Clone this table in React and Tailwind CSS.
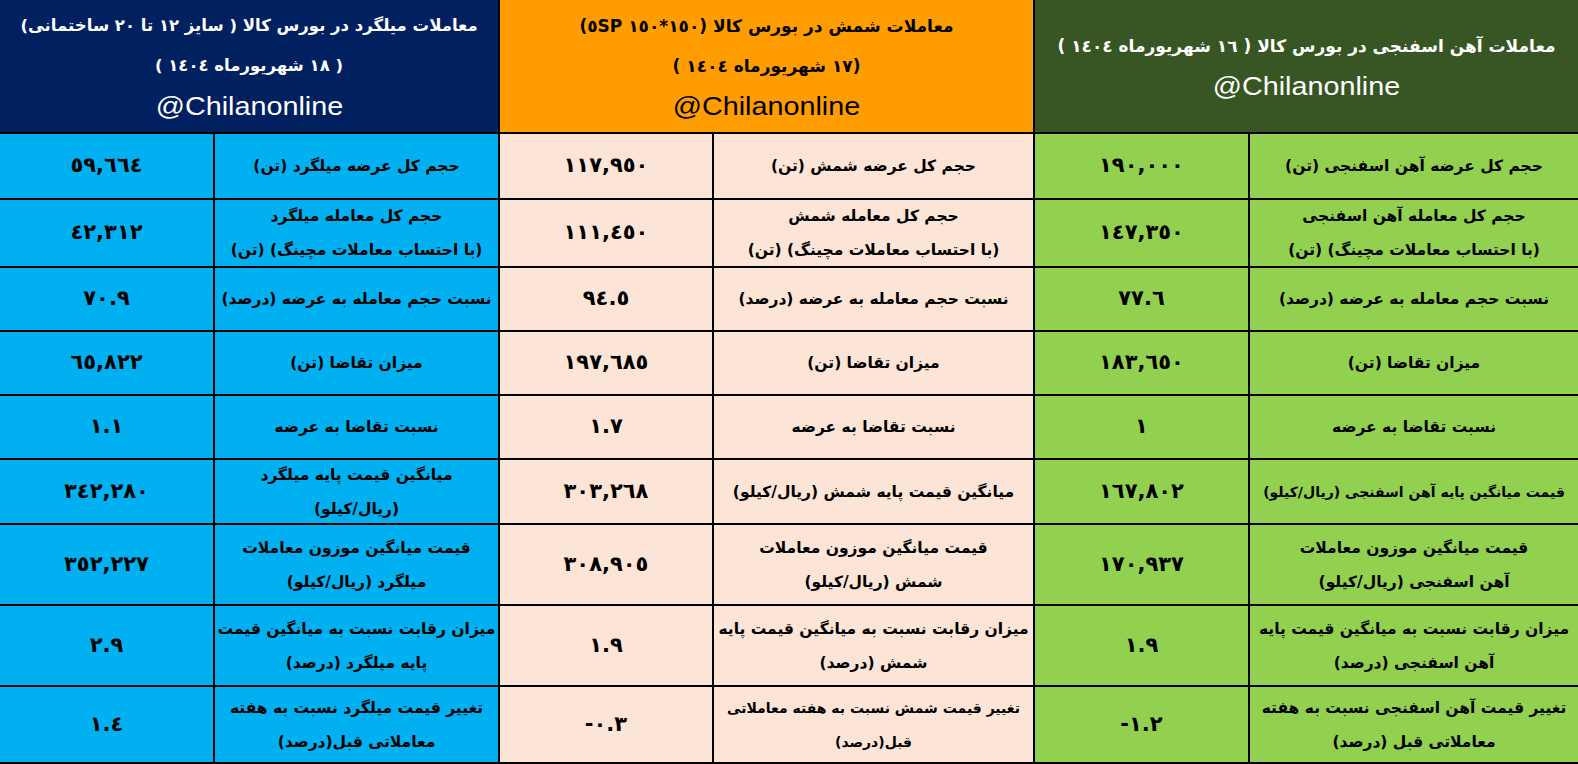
import React from "react";

const rowHeights = [
  "h-[64px]",
  "h-[66px]",
  "h-[62px]",
  "h-[62px]",
  "h-[62px]",
  "h-[63px]",
  "h-[79px]",
  "h-[79px]",
  "h-[75px]",
];

const panels = [
  {
    width: "w-[498px]",
    valueWidth: "w-[213px]",
    header: "bg-[#002060] text-white",
    titleSize: "text-[16.5px]",
    cell: "bg-[#00b0f0]",
    title: [
      "معاملات میلگرد در بورس کالا ( سایز ١٢ تا ٢٠ ساختمانی)",
      "( ١٨ شهریورماه  ١٤٠٤ )",
    ],
    rows: [
      ["٥٩,٦٦٤", ["حجم کل عرضه میلگرد (تن)"]],
      ["٤٢,٣١٢", ["حجم کل معامله میلگرد", "(با احتساب معاملات مچینگ) (تن)"]],
      ["٧٠.٩", ["نسبت حجم معامله به عرضه (درصد)"]],
      ["٦٥,٨٢٢", ["میزان تقاضا (تن)"]],
      ["١.١", ["نسبت تقاضا به عرضه"]],
      ["٣٤٢,٢٨٠", ["میانگین قیمت پایه میلگرد", "(ریال/کیلو)"]],
      ["٣٥٢,٢٢٧", ["قیمت میانگین موزون معاملات", "میلگرد (ریال/کیلو)"]],
      ["٢.٩", ["میزان رقابت نسبت به میانگین قیمت", "پایه میلگرد (درصد)"]],
      ["١.٤", ["تغییر قیمت میلگرد نسبت به هفته", "معاملاتی قبل(درصد)"]],
    ],
  },
  {
    width: "w-[533px]",
    valueWidth: "w-[212px]",
    header: "bg-[#ff9c00] text-black",
    titleSize: "text-[17px]",
    cell: "bg-[#fce4d6]",
    title: ["معاملات شمش در بورس کالا (١٥٠*١٥٠ ٥SP)", "(١٧ شهریورماه  ١٤٠٤ )"],
    rows: [
      ["١١٧,٩٥٠", ["حجم کل عرضه شمش (تن)"]],
      ["١١١,٤٥٠", ["حجم کل معامله شمش", "(با احتساب معاملات مچینگ) (تن)"]],
      ["٩٤.٥", ["نسبت حجم معامله به عرضه (درصد)"]],
      ["١٩٧,٦٨٥", ["میزان تقاضا (تن)"]],
      ["١.٧", ["نسبت تقاضا به عرضه"]],
      ["٣٠٣,٢٦٨", ["میانگین قیمت پایه شمش (ریال/کیلو)"]],
      ["٣٠٨,٩٠٥", ["قیمت میانگین موزون معاملات", "شمش (ریال/کیلو)"]],
      ["١.٩", ["میزان رقابت نسبت به میانگین قیمت پایه", "شمش (درصد)"]],
      ["-٠.٣", ["تغییر قیمت شمش نسبت به هفته معاملاتی", "قبل(درصد)"], true],
    ],
  },
  {
    width: "w-[543px]",
    valueWidth: "w-[213px]",
    header: "bg-[#375623] text-white",
    titleSize: "text-[17px]",
    cell: "bg-[#92d050]",
    title: ["معاملات آهن اسفنجی در بورس کالا ( ١٦ شهریورماه ١٤٠٤ )"],
    rows: [
      ["١٩٠,٠٠٠", ["حجم کل عرضه آهن اسفنجی (تن)"]],
      ["١٤٧,٣٥٠", ["حجم کل معامله آهن اسفنجی", "(با احتساب معاملات مچینگ) (تن)"]],
      ["٧٧.٦", ["نسبت حجم معامله به عرضه (درصد)"]],
      ["١٨٣,٦٥٠", ["میزان تقاضا (تن)"]],
      ["١", ["نسبت تقاضا به عرضه"]],
      ["١٦٧,٨٠٢", ["قیمت میانگین پایه آهن اسفنجی (ریال/کیلو)"], true],
      ["١٧٠,٩٣٧", ["قیمت میانگین موزون معاملات", "آهن اسفنجی (ریال/کیلو)"]],
      ["١.٩", ["میزان رقابت نسبت به میانگین قیمت پایه", "آهن اسفنجی (درصد)"]],
      ["-١.٢", ["تغییر قیمت آهن اسفنجی نسبت به هفته", "معاملاتی قبل (درصد)"]],
    ],
  },
];

const Panel = ({ panel }) => {
  return (
    <section className={`flex flex-col gap-[2px] ${panel.width}`}>
      {/* title block */}
      <header
        className={`flex h-[132px] flex-col items-center justify-center ${panel.header}`}
      >
        {panel.title.map((line) => (
          <div
            key={line}
            dir="rtl"
            className={`whitespace-nowrap font-bold leading-[40px] font-['DejaVu_Sans',sans-serif] ${panel.titleSize}`}
          >
            {line}
          </div>
        ))}
        <div className="scale-x-[1.15] whitespace-nowrap text-[25px] leading-[40px] font-['Liberation_Sans',Arial,sans-serif]">
          @Chilanonline
        </div>
      </header>

      {/* rows */}
      {panel.rows.map(([value, label, small], i) => (
        <div key={i} className={`flex gap-[2px] ${rowHeights[i]}`}>
          <div
            className={`flex shrink-0 items-center justify-center ${panel.valueWidth} ${panel.cell}`}
          >
            <span
              dir="ltr"
              className="text-[21px] font-bold text-black font-['DejaVu_Sans',sans-serif]"
            >
              {value}
            </span>
          </div>
          <div
            dir="rtl"
            className={`flex flex-1 flex-col items-center justify-center text-black ${panel.cell}`}
          >
            {label.map((line) => (
              <div
                key={line}
                className={`whitespace-nowrap font-bold leading-[34px] font-['DejaVu_Sans',sans-serif] ${
                  small ? "text-[14px]" : "text-[15.5px]"
                }`}
              >
                {line}
              </div>
            ))}
          </div>
        </div>
      ))}
    </section>
  );
};

export default function App() {
  return (
    <div className="flex h-[764px] w-[1578px] gap-[2px] overflow-hidden bg-black pb-[2px]">
      {panels.map((p, i) => (
        <Panel key={i} panel={p} />
      ))}
    </div>
  );
}
